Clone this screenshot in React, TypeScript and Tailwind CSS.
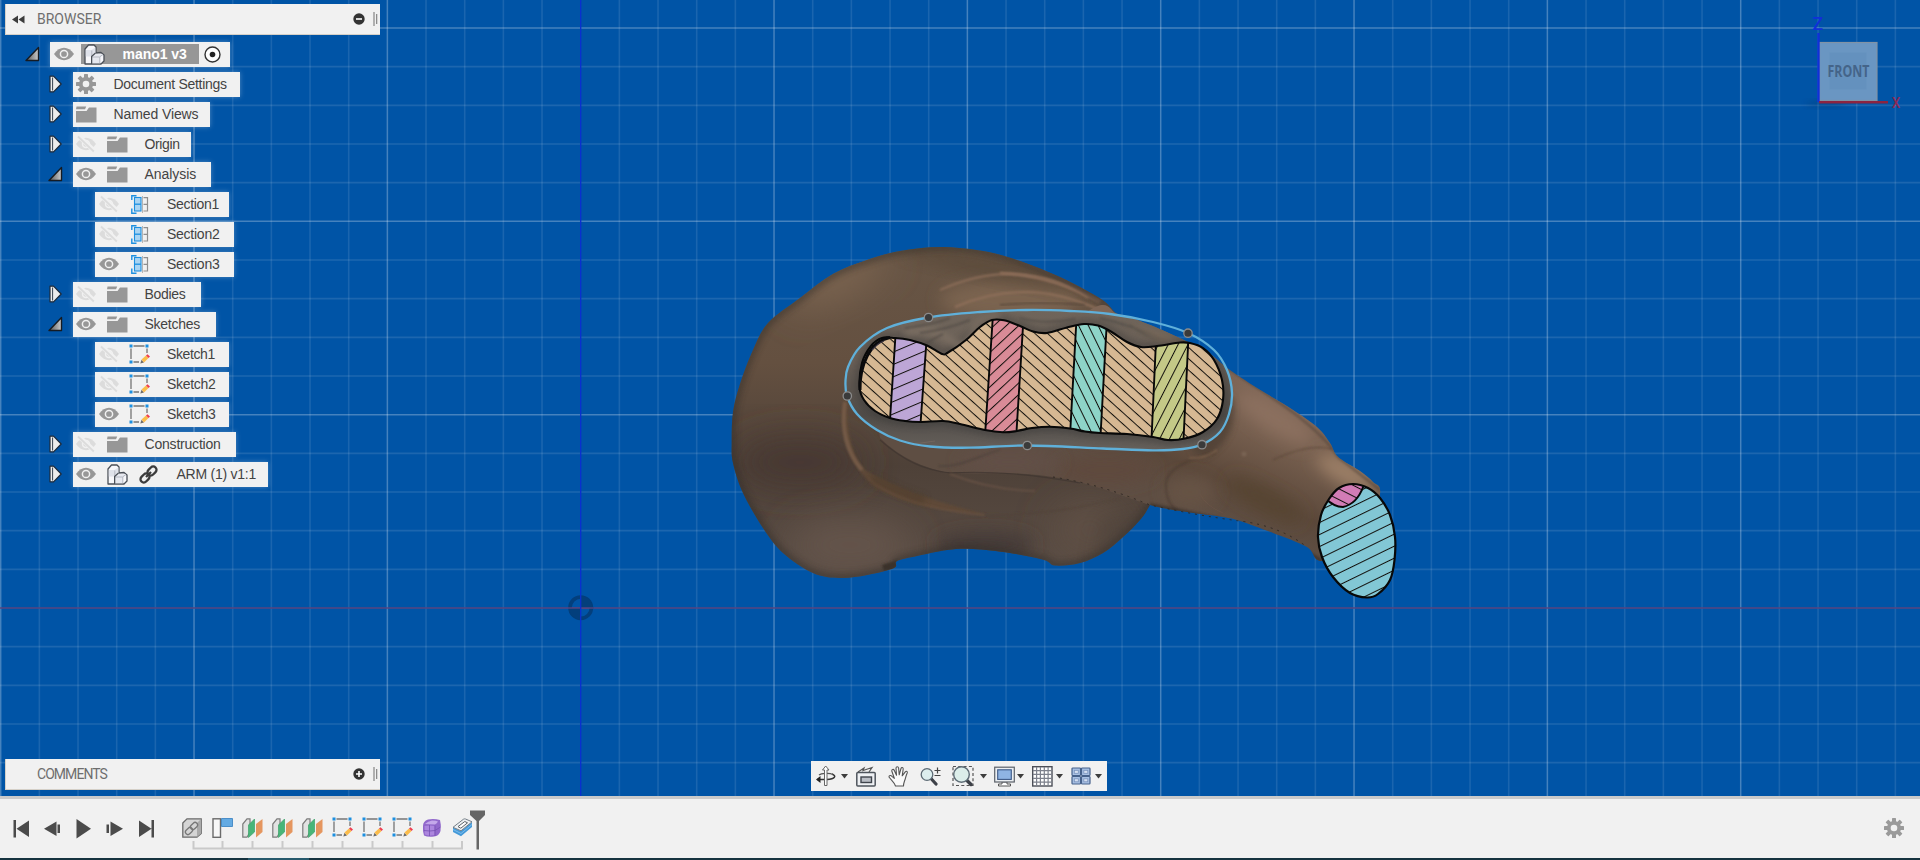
import React from "react";

type Pt = [number, number];

/* Closed or open Catmull-Rom spline through the given points. */
function spline(pts: Pt[], closed = true, t = 6): string {
  const n = pts.length;
  const at = (i: number): Pt =>
    closed ? pts[(i + n) % n] : pts[Math.max(0, Math.min(n - 1, i))];
  let d = `M${pts[0][0]} ${pts[0][1]}`;
  const segs = closed ? n : n - 1;
  for (let i = 0; i < segs; i++) {
    const p0 = at(i - 1), p1 = at(i), p2 = at(i + 1), p3 = at(i + 2);
    d += `C${(p1[0] + (p2[0] - p0[0]) / t).toFixed(1)} ${(p1[1] + (p2[1] - p0[1]) / t).toFixed(1)} ${(p2[0] - (p3[0] - p1[0]) / t).toFixed(1)} ${(p2[1] - (p3[1] - p1[1]) / t).toFixed(1)} ${p2[0]} ${p2[1]}`;
  }
  return closed ? d + "Z" : d;
}

const palm = spline([
  [731.7, 443], [733, 412], [740, 384], [753, 350], [768, 323], [800, 298], [833, 274], [867, 260], [900, 251],
  [940, 247], [983, 251], [1017, 260], [1053, 274], [1080, 287], [1104, 301], [1118, 315], [1150, 340], [1180, 400],
  [1175, 460], [1150, 505], [1140, 520], [1123, 537], [1103, 553], [1080, 563], [1055, 565.5], [1044, 560],
  [1010, 553], [973, 549], [947, 550], [917, 556], [897, 561], [894, 568], [867, 575], [840, 578],
  [813, 573], [783, 553], [763, 528], [743, 493], [733, 463],
]);
const thumb = spline([
  [1090, 310], [1118, 314], [1140, 321], [1173, 335], [1207, 352], [1227, 368], [1257, 388], [1290, 408], [1317, 427],
  [1330, 443], [1338, 457], [1360, 471], [1373, 482], [1380, 494], [1365, 545], [1322, 561], [1307, 547],
  [1273, 533], [1240, 521], [1223, 517], [1187, 512], [1150, 505], [1100, 488], [1060, 478], [1010, 473],
  [950, 473], [905, 458], [880, 438], [885, 410], [1000, 390],
]);
const section = spline([
  [895, 338], [882, 338], [871, 346], [862, 363], [859.5, 387], [864, 400], [875, 411], [890, 418], [905, 421], [920, 422],
  [943, 421], [960, 424], [985, 430], [1003, 432.3], [1017, 431], [1032, 428], [1050, 426.7], [1070, 428.5], [1085, 431.5], [1100, 433],
  [1127, 434], [1153, 437], [1168, 440], [1185, 438.5], [1203, 432], [1217, 419], [1223, 400], [1222, 380],
  [1214, 360], [1203, 348], [1190, 343], [1180, 342.5], [1157, 346], [1141, 347], [1127, 342], [1110, 331],
  [1098, 325.5], [1084, 324], [1067, 327.5], [1047, 333], [1033, 331.5], [1020, 326], [1004, 320.3], [992, 320],
  [980, 327], [966, 340], [948, 352.5], [942, 354], [927, 345.5], [910, 340],
]);
const loop = spline([
  [928, 317.5], [887, 328], [860, 347], [848, 367], [845.5, 381], [847, 396], [857, 414], [877, 430], [900, 440.5],
  [930, 446.5], [970, 447.7], [1027, 445.5], [1103, 448.5], [1153, 450.3], [1183, 449], [1202, 444.5], [1220, 432],
  [1229, 414], [1232, 393], [1227, 370], [1214, 350], [1188, 333], [1153, 322], [1110, 314], [1070, 311],
  [1027, 310], [980, 312],
]);
const tip = spline([
  [1353, 484], [1368, 488], [1380, 498], [1390, 515], [1395, 537], [1394.5, 560], [1390, 580], [1378, 594],
  [1367, 597.5], [1350, 593], [1333, 577], [1322, 557], [1318, 537], [1321, 515], [1329, 499], [1339, 488],
]);
const handles: Pt[] = [[928.5, 317.5], [847.3, 396], [1027.3, 445.5], [1202, 444.7], [1188, 333.2]];

function Hatch({ id, bg, angle, gap, w = 1 }: { id: string; bg: string; angle: number; gap: number; w?: number }) {
  return (
    <pattern id={id} width="40" height={gap} patternUnits="userSpaceOnUse" patternTransform={`rotate(${angle})`}>
      <rect width="40" height={gap} fill={bg} />
      <rect width="40" height={w} fill="#12100c" />
    </pattern>
  );
}

function Grid() {
  const out: React.ReactNode[] = [];
  for (let k = -15; k <= 34; k++) {
    if (k === 0) continue;
    const x = 580.7 + 38.667 * k;
    out.push(<line key={`v${k}`} x1={x} x2={x} y1="0" y2="796" stroke="#fff" strokeOpacity={k % 5 === 0 ? 0.27 : 0.1} strokeWidth={k % 5 === 0 ? 1.5 : 1.6} />);
  }
  for (let k = -4; k <= 15; k++) {
    if (k === 0) continue;
    const y = 608 - 38.667 * k;
    out.push(<line key={`h${k}`} y1={y} y2={y} x1="0" x2="1920" stroke="#fff" strokeOpacity={k % 5 === 0 ? 0.27 : 0.11} strokeWidth={k % 5 === 0 ? 1.5 : 1.6} />);
  }
  return <g>{out}</g>;
}

function Scene() {
  return (
    <svg className="absolute inset-0" width="1920" height="796" viewBox="0 0 1920 796">
      <defs>
        <Hatch id="tan" bg="#d6b893" angle={42} gap={8.4} />
        <Hatch id="purple" bg="#bda6d6" angle={-23} gap={11.4} />
        <Hatch id="pink" bg="#d98b97" angle={-43} gap={8.4} />
        <Hatch id="teal" bg="#8ed4c8" angle={64} gap={8.8} />
        <Hatch id="olive" bg="#c4c987" angle={-63} gap={8.8} />
        <Hatch id="cyan" bg="#82c7d5" angle={-26} gap={10.8} />
        <Hatch id="magenta" bg="#d27cb6" angle={27} gap={9.6} />
        <clipPath id="cPalm"><path d={palm} /></clipPath>
        <clipPath id="cThumb"><path d={thumb} /></clipPath>
        <clipPath id="cSection"><path d={section} /></clipPath>
        <clipPath id="cLoop"><path d={loop} /></clipPath>
        <clipPath id="cTip"><path d={tip} /></clipPath>
        <clipPath id="cBody"><path d={palm} /><path d={thumb} /></clipPath>
        <filter id="b20" x="-60%" y="-60%" width="220%" height="220%"><feGaussianBlur stdDeviation="18" /></filter>
        <filter id="b8" x="-60%" y="-60%" width="220%" height="220%"><feGaussianBlur stdDeviation="8" /></filter>
        <filter id="b3" x="-60%" y="-60%" width="220%" height="220%"><feGaussianBlur stdDeviation="3" /></filter>
        <filter id="b1" x="-30%" y="-30%" width="160%" height="160%"><feGaussianBlur stdDeviation="0.8" /></filter>
        <linearGradient id="gPalm" x1="0" y1="247" x2="0" y2="578" gradientUnits="userSpaceOnUse">
          <stop offset="0" stopColor="#685646" />
          <stop offset="0.35" stopColor="#645040" />
          <stop offset="0.66" stopColor="#4e4138" />
          <stop offset="1" stopColor="#5b4e46" />
        </linearGradient>
        <linearGradient id="gThumb" x1="1270" y1="390" x2="1215" y2="515" gradientUnits="userSpaceOnUse">
          <stop offset="0" stopColor="#7f6656" />
          <stop offset="0.35" stopColor="#755e4e" />
          <stop offset="0.75" stopColor="#5b483a" />
          <stop offset="1" stopColor="#5e4e43" />
        </linearGradient>
        <linearGradient id="gInner" x1="0" y1="310" x2="0" y2="450" gradientUnits="userSpaceOnUse">
          <stop offset="0" stopColor="#6f655b" />
          <stop offset="0.35" stopColor="#6b6057" />
          <stop offset="0.75" stopColor="#504c48" />
          <stop offset="1" stopColor="#66605b" />
        </linearGradient>
      </defs>

      <rect width="1920" height="796" fill="#0054a6" />
      <Grid />
      <line x1="0" x2="1920" y1="608" y2="608" stroke="#59447f" strokeWidth="1.6" />
      <g>
        <circle cx="580.7" cy="607.7" r="10.7" fill="none" stroke="#033f7c" strokeWidth="3.6" />
        <path d="M580.7 607.7V596A12 12 0 0 1 592.5 607.7ZM580.7 607.7V619.5A12 12 0 0 1 569 607.7Z" fill="#033f7c" />
        <path d="M568 608H593" stroke="#59447f" strokeWidth="1.4" />
      </g>
      <line x1="580.7" x2="580.7" y1="0" y2="796" stroke="#0b2fd0" strokeWidth="1.3" />

      <path d={palm} fill="url(#gPalm)" />
      <g clipPath="url(#cPalm)">
        <ellipse cx="835" cy="278" rx="55" ry="22" fill="#7a634f" filter="url(#b20)" transform="rotate(-25 835 278)" />
        <ellipse cx="1010" cy="300" rx="70" ry="20" fill="#7a6450" filter="url(#b8)" />
        <ellipse cx="990" cy="268" rx="90" ry="9" fill="#574737" opacity=".7" filter="url(#b8)" transform="rotate(12 990 268)" />
        <ellipse cx="800" cy="462" rx="65" ry="26" fill="#463930" filter="url(#b20)" />
        <ellipse cx="850" cy="545" rx="62" ry="26" fill="#65554c" filter="url(#b20)" />
        <ellipse cx="1090" cy="530" rx="40" ry="30" fill="#5f5044" filter="url(#b20)" />
        <ellipse cx="985" cy="544" rx="50" ry="13" fill="#453b37" filter="url(#b8)" />
        <path d={palm} fill="none" stroke="#2e2926" strokeWidth="8" opacity=".45" filter="url(#b3)" />
        <path d="M1090 566C1120 556 1142 530 1152 508L1100 520Z" fill="#3f3733" opacity=".3" filter="url(#b8)" />
        <path d="M882 565L898 560L896 569L884 571Z" fill="#3a322c" filter="url(#b1)" />
        <path d="M940 290Q985 270 1025 275T1088 298" fill="none" stroke="#8c6d58" strokeWidth="1.8" filter="url(#b1)" />
        <path d="M1000 273Q1050 275 1100 302" fill="none" stroke="#8d6d58" strokeWidth="2.6" filter="url(#b1)" />
        <path d="M955 307Q990 292 1025 292T1100 310" fill="none" stroke="#8f6f5a" strokeWidth="2.1" filter="url(#b1)" />
        <path d="M1000 305Q1040 301 1085 305" fill="none" stroke="#59483b" strokeWidth="1.5" filter="url(#b1)" />
        <path d="M1020 262Q1060 275 1112 310" fill="none" stroke="#54473d" strokeWidth="3" opacity=".7" filter="url(#b1)" />
        <path d="M844 397C838 430 848 462 872 485C900 504 935 510 985 514C935 502 895 488 865 470C850 455 847 425 848 405Z" fill="#5f4a37" filter="url(#b1)" />
        <path d="M845 402C841 430 846 452 862 470" fill="none" stroke="#7a5f4b" strokeWidth="4" opacity=".8" filter="url(#b1)" />
        <path d="M868 478C890 497 930 510 985 515" fill="none" stroke="#705644" strokeWidth="1.5" opacity=".8" filter="url(#b1)" />
        <path d="M870 478C890 487 905 495 925 500" fill="none" stroke="#4b3a2a" strokeWidth="8" opacity=".6" filter="url(#b3)" />
        <path d="M985 515Q1050 516 1120 498" fill="none" stroke="#514339" strokeWidth="1.2" filter="url(#b1)" />
      </g>

      <clipPath id="cThumbVisible">
        <path d="M1420 300V620H1280L1150 506C1110 489 1040 474 985 472L945 472C925 468 900 458 880 438L860 300Z" />
      </clipPath>
      <path d={thumb} fill="url(#gThumb)" clipPath="url(#cThumbVisible)" />
      <g clipPath="url(#cThumb)">
        <ellipse cx="1275" cy="418" rx="45" ry="15" fill="#8b705e" filter="url(#b8)" transform="rotate(32 1275 418)" />
        <ellipse cx="1345" cy="472" rx="32" ry="11" fill="#9d8068" filter="url(#b8)" transform="rotate(30 1345 472)" />
        <ellipse cx="1105" cy="470" rx="50" ry="14" fill="#5e4a3d" filter="url(#b8)" />
        <ellipse cx="1010" cy="462" rx="50" ry="12" fill="#625046" filter="url(#b8)" />
        <ellipse cx="1265" cy="500" rx="42" ry="12" fill="#574433" filter="url(#b8)" transform="rotate(28 1265 500)" />
        <ellipse cx="1190" cy="492" rx="26" ry="16" fill="#665245" filter="url(#b8)" />
        <path d="M1232 395C1240 430 1222 448 1205 458L1190 450Z" fill="#4f4035" opacity=".8" filter="url(#b3)" />
        <path d="M1215 453C1190 458 1169 468 1166 482C1165 500 1172 508 1182 515" fill="none" stroke="#4b3c31" strokeWidth="1.5" opacity=".8" filter="url(#b1)" />
        <path d="M1189 458Q1205 459 1217 450" fill="none" stroke="#86684f" strokeWidth="1.2" filter="url(#b1)" />
        <path d="M1273 460C1290 452 1312 444 1332 449" fill="none" stroke="#5a4537" strokeWidth="1.2" filter="url(#b1)" />
        <circle cx="1244" cy="454" r="2.500" fill="#806a5a" opacity=".7" filter="url(#b1)" />
        <path d="M1200 494Q1206 506 1223 513" fill="none" stroke="#705a4b" strokeWidth=".7" opacity=".6" />
        <path d="M1118 314C1160 328 1215 358 1227 368C1260 390 1317 423 1338 457L1380 490" fill="none" stroke="#3d342d" strokeWidth="2" opacity=".45" filter="url(#b1)" />
        <path d="M1150 505C1200 514 1265 527 1322 561" fill="none" stroke="#2f2823" strokeWidth="4" opacity=".5" filter="url(#b1)" />
      </g>
      <path d="M1053 477Q1100 484 1150 505Q1200 516 1240 521T1307 547" fill="none" stroke="#302924" strokeWidth="1" strokeDasharray="2 5" />
      <path d="M880 440C905 462 925 470 950 473C980 471 1020 472 1080 483" fill="none" stroke="#3b322e" strokeWidth="1.1" opacity=".55" />
      <path d="M938 466C960 468 980 455 1000 450" fill="none" stroke="#4c403a" strokeWidth="1.2" filter="url(#b1)" />
      <path d="M950 474C975 484 1000 490 1035 491" fill="none" stroke="#72594a" strokeWidth="1.2" filter="url(#b1)" />

      <g clipPath="url(#cBody)">
        <g clipPath="url(#cLoop)">
          <rect x="840" y="305" width="400" height="150" fill="url(#gInner)" />
          <path d={section} fill="none" stroke="#333130" strokeWidth="10" opacity=".35" filter="url(#b3)" />
          <path d="M905 333Q930 325 950 340T975 325Q985 315 1000 316" fill="none" stroke="#7d7063" strokeWidth="6" filter="url(#b3)" />
          <path d="M905 328Q935 324 950 318M920 333Q945 330 970 320M925 344Q935 338 943 334" fill="none" stroke="#4a443f" strokeWidth="1.4" opacity=".7" filter="url(#b1)" />
          <path d="M1020 318Q1045 325 1075 319M1100 318Q1130 325 1165 340M1130 325Q1145 337 1160 340" fill="none" stroke="#504b46" strokeWidth="1.8" opacity=".7" filter="url(#b1)" />
          <path d="M1125 322L1185 340L1160 342Z" fill="#7b6a5a" opacity=".7" filter="url(#b3)" />
          <path d="M902 444Q920 444 935 441" fill="none" stroke="#7d7064" strokeWidth=".8" opacity=".7" />
        </g>
      </g>

      <path d={loop} fill="none" stroke="#5fb0da" strokeWidth="2.3" />
      <path d={section} fill="url(#tan)" />
      <g clipPath="url(#cSection)" stroke="#080808" strokeWidth="1.900">
        <path d="M896.5 320L889 435H919.7L928 320Z" fill="url(#purple)" />
        <path d="M993.3 310L984.7 440H1016L1024 310Z" fill="url(#pink)" />
        <path d="M1077 310L1069.5 445H1100L1107.5 310Z" fill="url(#teal)" />
        <path d="M1156.5 330L1151 450H1183L1188.8 330Z" fill="url(#olive)" />
      </g>
      <path d={section} fill="none" stroke="#080808" strokeWidth="2.1" />
      <path d="M890 337.5C870 341 859.5 365 860 390" fill="none" stroke="#0a0a0c" strokeWidth="3" />
      <path d="M872 350Q878 343 884 341" fill="none" stroke="#3a3340" strokeWidth="1.3" />

      <path d={tip} fill="url(#cyan)" />
      <g clipPath="url(#cTip)">
        <path d="M1325 498Q1334 507 1343 507Q1357 504 1363.5 486L1350 470L1320 480Z" fill="url(#magenta)" stroke="#080808" strokeWidth="2" />
      </g>
      <path d={tip} fill="none" stroke="#080808" strokeWidth="2.2" />

      {handles.map(([x, y]) => (
        <circle key={x} cx={x} cy={y} r="4.200" fill="#3a3a3a" stroke="#8b8b8b" strokeWidth="1.300" />
      ))}

      <ViewCube />
    </svg>
  );
}

function ViewCube() {
  return (
    <g>
      <ellipse cx="1826" cy="104" rx="20" ry="2.500" fill="#02346c" opacity=".45" filter="url(#b3)" />
      <rect x="1819.5" y="42.5" width="57.5" height="58" fill="#6a96c2" stroke="#8193a5" strokeWidth="1.2" />
      <rect x="1829.5" y="52.5" width="37" height="37" fill="#6491be" />
      <text x="1848.5" y="77" textAnchor="middle" textLength="42" lengthAdjust="spacingAndGlyphs" fontFamily="'Open Sans', sans-serif" fontWeight="700" fontSize="15.5" fill="#446489">FRONT</text>
      <path d="M1818.5 33V102" stroke="#1030d8" strokeWidth="2.4" />
      <path d="M1819 102.3H1888" stroke="#8c2440" strokeWidth="2.4" />
      <text x="1817.7" y="29.5" textAnchor="middle" fontFamily="Roboto, sans-serif" fontSize="17.5" fontWeight="500" fill="#1030d8">Z</text>
      <text x="1896" y="107.5" textAnchor="middle" textLength="8.5" lengthAdjust="spacingAndGlyphs" fontFamily="Roboto, sans-serif" fontSize="15.5" fontWeight="500" fill="#8c2a55">X</text>
    </g>
  );
}

/* ---------- tree icons ---------- */

const Eye = () => (
  <svg width="20" height="14" viewBox="0 0 20 14">
    <path d="M0 7Q4.5 .8 10 .8T20 7Q15.5 13.2 10 13.2T0 7Z" fill="#979797" />
    <circle cx="10" cy="7" r="3.6" fill="none" stroke="#f1f1f1" strokeWidth="1.5" />
  </svg>
);
const EyeOff = () => (
  <svg width="20" height="18" viewBox="0 0 20 18">
    <path d="M0 9Q4.5 2.8 10 2.8T20 9Q15.5 15.2 10 15.2T0 9Z" fill="#dcdcdc" />
    <circle cx="10" cy="9" r="3.5" fill="none" stroke="#f1f1f1" strokeWidth="1.5" />
    <path d="M2.5 1L18.5 16" stroke="#f1f1f1" strokeWidth="4.5" />
    <path d="M2 1.5L17.8 16.5" stroke="#dcdcdc" strokeWidth="1.8" />
  </svg>
);
const Folder = () => (
  <svg width="21" height="17" viewBox="0 0 21 17">
    <path d="M0 5H10.500L13 1.500H20.500V16.500H0Z" fill="#979797" />
    <path d="M.5 .5H10.200L9 3.300H0Z" fill="#979797" />
  </svg>
);
const Gear = ({ s = 20, c = "#979797" }: { s?: number; c?: string }) => (
  <svg width={s} height={s} viewBox="-10 -10 20 20">
    {[0, 45, 90, 135].map((a) => (
      <rect key={a} x="-2" y="-10" width="4" height="20" rx=".6" fill={c} transform={`rotate(${a})`} />
    ))}
    <circle r="7.1" fill={c} />
    <circle r="3.3" fill="#f1f1f1" />
  </svg>
);
const Cubes = () => (
  <svg width="21" height="21" viewBox="0 0 21 21" strokeLinejoin="round">
    <path d="M1 5L4.5 1H10L12 3V9L17 8.5L20 11V17L17 20H1Z" fill="#f7f7fa" stroke="#4a4f57" strokeWidth="1.3" />
    <path d="M1.8 6H7.5L11.3 3.5V9L7.5 12.5H1.8Z" fill="#dfe2ea" />
    <path d="M8 19.2V13L11 9.8L19.2 10.5L16 13.5V19.2Z" fill="#e6e8ef" />
    <path d="M7.8 19V6.5M7.8 13H15.5L19 10.5M15.8 19V13" fill="none" stroke="#b4b8c2" strokeWidth="1" />
    <path d="M7.6 20V12.5L11.5 9" fill="none" stroke="#4a4f57" strokeWidth="1.2" />
  </svg>
);
const LinkIcon = () => (
  <svg width="21" height="21" viewBox="0 0 21 21" fill="none" stroke="#3c3c3c" strokeWidth="2.3">
    <rect x="-5" y="-3.3" width="10" height="6.6" rx="3.3" transform="translate(14 7) rotate(-45)" />
    <rect x="-5" y="-3.3" width="10" height="6.6" rx="3.3" transform="translate(7 14) rotate(-45)" />
    <path d="M8 13L13 8" />
  </svg>
);
const SectionIcon = () => (
  <svg width="18" height="19" viewBox="0 0 18 19" fill="none">
    <rect x="3.5" y="2.5" width="6.5" height="13.5" fill="#a8d4f3" stroke="#1c8fe0" strokeWidth="1.1" />
    <path d="M3.5 9.2H10" stroke="#1c8fe0" strokeWidth="1.3" />
    <path d="M5.5 .7H.8V5M.8 13.5V18.2H5.5" stroke="#1c8fe0" strokeWidth="1.4" />
    <path d="M11.5 1V18" stroke="#a6a6a6" strokeWidth=".8" />
    <path d="M12.5 2.7H16.5V16H12.5M12.5 9.3H16.5" stroke="#8f8f8f" strokeWidth="1.2" />
  </svg>
);
const SketchIcon = () => (
  <svg width="21" height="21" viewBox="0 0 21 21">
    <path d="M4.5 2H15.5M2 4.5V15M18 4.5V9M4.5 18H10" stroke="#757575" strokeWidth="1.3" fill="none" />
    <path d="M.5 .5h3v3h-3zM16.5 .5h3v3h-3zM.5 16.5h3v3h-3z" fill="#1c8fe0" />
    <path d="M11.3 19.5L12.5 15.8L15 18.5Z" fill="#6b6b6b" />
    <path d="M12.5 15.5L17 11.5L19.5 14L15 18.5Z" fill="#fbbc4b" />
    <path d="M17 11.5L18.5 10.2L21 12.5L19.5 14Z" fill="#ee3b4e" />
  </svg>
);

const Collapsed = () => (
  <svg width="15" height="18" viewBox="0 0 15 18">
    <path d="M2 1.2H5.5L13.2 9L5.5 16.8H2Z" fill="#ececec" stroke="#1e2b3a" strokeWidth="1.2" strokeLinejoin="round" />
    <path d="M4.6 2.5V15.5" stroke="#1e2b3a" strokeWidth=".9" />
  </svg>
);
const Expanded = () => (
  <svg width="15" height="16" viewBox="0 0 15 16">
    <defs><linearGradient id="exp" x1="0" x2="1"><stop offset="0" stopColor="#555" /><stop offset="1" stopColor="#ccc" /></linearGradient></defs>
    <path d="M13.5 1.5V14.5H1Z" fill="url(#exp)" stroke="#161b22" strokeWidth="1.4" strokeLinejoin="round" />
  </svg>
);

interface Row {
  label: string;
  level: 1 | 2;
  state?: "open" | "closed";
  eye?: "on" | "off";
  icon: "gear" | "folder" | "section" | "sketch" | "link";
  width: string;
  tracking: string;
}

const rows: Row[] = [
  { label: "Document Settings", level: 1, state: "closed", icon: "gear", width: "w-[167px]", tracking: "tracking-[-0.3px]" },
  { label: "Named Views", level: 1, state: "closed", icon: "folder", width: "w-[137px]", tracking: "tracking-[-0.1px]" },
  { label: "Origin", level: 1, state: "closed", eye: "off", icon: "folder", width: "w-[118px]", tracking: "tracking-[-0.35px]" },
  { label: "Analysis", level: 1, state: "open", eye: "on", icon: "folder", width: "w-[138px]", tracking: "tracking-[-0.05px]" },
  { label: "Section1", level: 2, eye: "off", icon: "section", width: "w-[134px]", tracking: "tracking-[-0.3px]" },
  { label: "Section2", level: 2, eye: "off", icon: "section", width: "w-[139px]", tracking: "tracking-[-0.25px]" },
  { label: "Section3", level: 2, eye: "on", icon: "section", width: "w-[139px]", tracking: "tracking-[-0.25px]" },
  { label: "Bodies", level: 1, state: "closed", eye: "off", icon: "folder", width: "w-[128px]", tracking: "tracking-[-0.3px]" },
  { label: "Sketches", level: 1, state: "open", eye: "on", icon: "folder", width: "w-[143px]", tracking: "tracking-[-0.25px]" },
  { label: "Sketch1", level: 2, eye: "off", icon: "sketch", width: "w-[134px]", tracking: "tracking-[-0.4px]" },
  { label: "Sketch2", level: 2, eye: "off", icon: "sketch", width: "w-[134px]", tracking: "tracking-[-0.3px]" },
  { label: "Sketch3", level: 2, eye: "on", icon: "sketch", width: "w-[134px]", tracking: "tracking-[-0.3px]" },
  { label: "Construction", level: 1, state: "closed", eye: "off", icon: "folder", width: "w-[163px]", tracking: "tracking-[-0.2px]" },
  { label: "ARM (1) v1:1", level: 1, state: "closed", eye: "on", icon: "link", width: "w-[195px]", tracking: "tracking-[-0.25px]" },
];

function TreeRow({ row }: { row: Row }) {
  const icon = {
    gear: <Gear />, folder: <Folder />, section: <SectionIcon />, sketch: <SketchIcon />, link: <Cubes />,
  }[row.icon];
  return (
    <div className="flex h-[25px] items-center">
      <div className={row.level === 1 ? "flex w-[72.5px] shrink-0 pl-12" : "w-[95px] shrink-0"}>
        {row.state === "closed" && <Collapsed />}
        {row.state === "open" && <Expanded />}
      </div>
      <div className={`flex h-[25px] items-center bg-[#f1f1f1] shadow-[0_0_5px_rgba(255,255,255,0.3)] ${row.width}`}>
        {row.eye && <span className="flex w-[27px] shrink-0 justify-center">{row.eye === "on" ? <Eye /> : <EyeOff />}</span>}
        <span className={row.eye ? "flex w-[35px] shrink-0 justify-center" : "mr-1 flex w-[27px] shrink-0 justify-center"}>{icon}</span>
        {row.icon === "link" && <span className="mr-1 flex w-7 shrink-0 justify-center"><LinkIcon /></span>}
        <span className={`ml-2.5 whitespace-nowrap ${row.tracking}`}>{row.label}</span>
      </div>
    </div>
  );
}

function Panel({ title, open }: { title: string; open: boolean }) {
  return (
    <div className="ml-[5px] flex h-[31px] w-[375px] items-center border-b border-l border-[#d5d0c8] bg-[#f1f1f1] pr-[2px]">
      <span className="flex w-[31px] pl-[6px]">
        {open && (
          <svg width="13" height="9" viewBox="0 0 13 9"><path d="M6 .5V8.5L0 4.5ZM12.5 .5V8.5L6.5 4.5Z" fill="#3c3c3c" /></svg>
        )}
      </span>
      <span className={`flex-1 font-[Roboto,sans-serif] text-[14px] text-[#6e6e6e] ${open ? "tracking-[0px]" : "tracking-[-0.95px]"}`}>{title}</span>
      <svg width="12" height="12" viewBox="0 0 12 12">
        <circle cx="6" cy="6" r="5.7" fill="#333" />
        <path d={open ? "M3 6H9" : "M3 6H9M6 3V9"} stroke="#fff" strokeWidth="1.6" />
      </svg>
      <svg className="ml-2" width="5" height="14" viewBox="0 0 5 14"><path d="M1 0V14M3.7 2V12" stroke="#7b7b7b" strokeWidth="1.100" /></svg>
    </div>
  );
}

/* ---------- navigation bar ---------- */

const Caret = () => (
  <svg width="7" height="5" viewBox="0 0 7 5"><path d="M0 0H7L3.5 4.5Z" fill="#3d3d3d" /></svg>
);

function NavBar() {
  return (
    <div className="absolute top-[761px] left-[811px] flex h-[30px] w-[296px] items-center bg-[#f1f1f1] pl-[4px]">
      <svg width="21" height="22" viewBox="0 0 21 22" fill="none">
        <path d="M17 9C22 11 20 14 12 14.5H2" stroke="#333" strokeWidth="1.5" />
        <path d="M4 10C6 8.5 14 7.5 18 9.5" stroke="#555" strokeWidth="1.3" />
        <path d="M5.5 11L1 14.5L5.5 18Z" fill="#222" />
        <path d="M9.5 20.5V5H7.5L10.7 1L14 5H12V20.5Z" fill="#fff" stroke="#666" strokeWidth="1" />
      </svg>
      <span className="ml-[5px]"><Caret /></span>
      <svg className="ml-2" width="20" height="21" viewBox="0 0 20 21" fill="none">
        <path d="M2 6L8 2L7 4.5L16 1.5L13 6" stroke="#555" strokeWidth="1.2" />
        <rect x=".8" y="6.5" width="18.4" height="13.5" rx="1" fill="#eef0f3" stroke="#4e545c" strokeWidth="1.5" />
        <rect x="5" y="11" width="10.5" height="5.5" fill="#b9bdc4" stroke="#3f444c" strokeWidth="1.4" />
      </svg>
      <svg className="ml-3" width="21" height="21" viewBox="0 0 21 21">
        <path d="M7.5 20C6.5 16.5 3 14 1 11C.8 9.3 2.8 9 4 10.3L6.3 12.3L3.8 5C3.5 3.3 5.5 2.8 6.2 4.3L8.5 9.3L8 2C8.2.4 10.3.4 10.6 2L11.2 8.8L13 2.5C13.5 1 15.3 1.4 15.2 3L14.2 9.8L17.3 5.8C18.4 4.7 19.8 5.6 19.2 7C17.5 10.5 17.8 12 16.5 15C15.8 17 15.5 18 15.5 20Z" fill="#fafafa" stroke="#555" strokeWidth="1.1" strokeLinejoin="round" />
      </svg>
      <svg className="ml-[11px]" width="22" height="20" viewBox="0 0 22 20">
        <path d="M10.5 12L16 18" stroke="#3d4148" strokeWidth="3.2" strokeLinecap="round" />
        <circle cx="7" cy="8.5" r="5.8" fill="#dceeee" stroke="#5d6b75" strokeWidth="1.3" />
        <path d="M14.5 4.5H20.5M17.5 1.5V7.5M14.5 9.5H20.5" stroke="#444" strokeWidth="1.2" />
      </svg>
      <svg className="ml-[10px]" width="22" height="22" viewBox="0 0 22 22" fill="none">
        <path d="M1 1.5H21V20.5H1Z" stroke="#555" strokeWidth="1.2" strokeDasharray="3 2.3" />
        <path d="M13.5 14L19 19.5" stroke="#3d4148" strokeWidth="3.4" strokeLinecap="round" />
        <circle cx="9.5" cy="9.5" r="7.8" fill="#dceeea" stroke="#5d6b75" strokeWidth="1.4" />
      </svg>
      <span className="ml-[6px]"><Caret /></span>
      <svg className="ml-[7px]" width="21" height="21" viewBox="0 0 21 21">
        <path d="M8 16H13V18H16.5V20H4.5V18H8Z" fill="#fff" stroke="#555" strokeWidth="1" />
        <rect x=".7" y="1.2" width="19.6" height="14.8" fill="#eceff2" stroke="#5c626a" strokeWidth="1.2" />
        <rect x="3.7" y="3.8" width="13.6" height="9.6" fill="#8fb4e3" stroke="#3d5a86" strokeWidth="1.1" />
      </svg>
      <span className="ml-[2px]"><Caret /></span>
      <svg className="ml-2" width="21" height="21" viewBox="0 0 21 21" fill="none">
        <rect x=".7" y=".7" width="19.3" height="19.3" fill="#fff" stroke="#4c4f57" strokeWidth="1.4" />
        <path d="M4.6 1V20M8.4 1V20M12.3 1V20M16.1 1V20M1 4.6H20M1 8.4H20M1 12.3H20M1 16.1H20" stroke="#7d818c" strokeWidth="1.2" />
      </svg>
      <span className="ml-[3px]"><Caret /></span>
      <svg className="ml-2" width="20" height="18" viewBox="0 0 20 18">
        {[[1, 1], [10.5, 1], [1, 9.5], [10.5, 9.5]].map(([x, y]) => (
          <g key={`${x}-${y}`}>
            <rect x={x} y={y} width="8.5" height="7.5" rx=".8" fill="#a9c1e4" stroke="#47628c" strokeWidth="1.2" />
            <rect x={x + 2.3} y={y + 2.3} width="4" height="3" fill="#d5e0f2" stroke="#7a93bd" strokeWidth=".8" />
          </g>
        ))}
      </svg>
      <span className="ml-[4px]"><Caret /></span>
    </div>
  );
}

/* ---------- timeline ---------- */

const LinkedPart = () => (
  <svg width="20" height="20" viewBox="0 0 20 20" fill="none">
    <path d="M.8 5L5 .8H19.2V15.5L15 19.2H.8Z" fill="#d5d5d5" stroke="#6b6b6b" strokeWidth="1.3" />
    <path d="M15 19L19 15.5V1L15 5Z" fill="#aaa" />
    <g stroke="#777" strokeWidth="1.3">
      <rect x="-4" y="-2.5" width="8" height="5" rx="2.5" transform="translate(7 13) rotate(-45)" />
      <rect x="-4" y="-2.5" width="8" height="5" rx="2.5" transform="translate(12 8) rotate(-45)" />
    </g>
  </svg>
);
const Canvas = () => (
  <svg width="21" height="20" viewBox="0 0 21 20">
    <rect x="1" y=".8" width="7.5" height="18.5" fill="#f7f7f7" stroke="#6b6b6b" strokeWidth="1.4" />
    <path d="M9.5 .5H20.5V8.5H9.5Z" fill="#64aae2" stroke="#3f87c4" strokeWidth=".9" />
  </svg>
);
const Split = () => (
  <svg width="21" height="20" viewBox="0 0 21 20">
    <path d="M.8 19.2V6L5 .8H8V14L5 19.2Z" fill="#e2e2e2" stroke="#7b7b7b" strokeWidth="1.2" />
    <path d="M6.5 7L12.5 1V14L6.5 19.5Z" fill="#49b579" stroke="#3ba36a" strokeWidth=".7" />
    <path d="M14 6L20.5 1V14L14 19.5Z" fill="#e5965f" />
  </svg>
);
const Form = () => (
  <svg width="20" height="20" viewBox="0 0 20 20">
    <path d="M1 8Q1 3 6 1.5Q12 .5 18 2Q19.5 7 18.5 13Q17 18 12 18.5Q6 19.5 2 17.5Q.5 13 1 8Z" fill="#9168cb" />
    <path d="M3 6Q6 3 10 2.5Q14 2.5 16 3.5Q15 5.500 13 6.500Q7 6 3 6Z" fill="#c4a8ea" />
    <path d="M2.5 8Q8 7 12.5 8V17Q7 18 2.8 16.5Z" fill="#ac86de" />
    <path d="M7.5 7V18M2 12.5Q8 13.5 13 12.5L18.5 9M13 7.5V18" fill="none" stroke="#7650b2" strokeWidth=".8" />
  </svg>
);
const Shell = () => (
  <svg width="21" height="19" viewBox="0 0 21 19">
    <path d="M1 9.5V14L9 18.300L20 9V4L9 13Z" fill="#4499d8" />
    <path d="M1 11.500L9 15.500L20 6.500" fill="none" stroke="#7dbdec" strokeWidth="1" />
    <path d="M1 9.300L11.500 1.200Q12.500 .6 13.500 1L20 3.800L9 12.800Z" fill="#eef1f3" stroke="#737d86" strokeWidth="1" />
    <path d="M6 8.600L12.800 3.500L15.500 4.800L8.800 10.200Z" fill="#fff" stroke="#5b6269" strokeWidth="1" />
  </svg>
);

const features = [LinkedPart, Canvas, Split, Split, Split, SketchIcon, SketchIcon, SketchIcon, Form, Shell];

function Timeline() {
  return (
    <footer className="flex h-[62px] w-full items-start border-t-[3px] border-[#cacaca] bg-[#f1f1f1]">
      <div className="mt-5 ml-[13px] flex items-center">
        <svg width="142" height="20" viewBox="0 0 142 20" fill="#4b4b4b">
          <path d="M.5 1H3V18.5H.5ZM16 1.5V18L3.5 9.8Z" />
          <path d="M43.5 2.5V17L31 9.8ZM44.5 5.5H47V14H44.5Z" />
          <path d="M63.5 0V19.5L78 9.8Z" />
          <path d="M93.5 5.5H96V14H93.5ZM97.5 2.5V17L110 9.8Z" />
          <path d="M126 1.5V18L138.5 9.8ZM138.5 1H141V18.5H138.5Z" />
        </svg>
      </div>
      <div className="ml-[22px] flex flex-col pt-[18px]">
        <div className="flex">
          {features.map((Icon, i) => (
            <span key={i} className="flex h-[21px] w-[30px] items-center justify-center"><Icon /></span>
          ))}
        </div>
        <svg className="mt-[3px] ml-[15px]" width="272" height="10" viewBox="0 0 272 10">
          <path d="M1.5 0V7.5H270V0M30.5 0V7M60.5 0V7M90.5 0V7M120.5 0V7M150.5 0V7M180.5 0V7M210.5 0V7M240.5 0V7" fill="none" stroke="#c9c9c9" strokeWidth="2" />
        </svg>
      </div>
      <svg className="mt-[11px] -ml-[7px]" width="15" height="40" viewBox="0 0 15 40">
        <path d="M0 .5H15V5L9 11V39.5H6.5V11L0 5Z" fill="#666" />
      </svg>
      <div className="mt-[19px] mr-4 ml-auto"><Gear c="#9a9a9a" /></div>
    </footer>
  );
}

export default function App() {
  return (
    <div className="flex h-[860px] w-[1920px] flex-col overflow-hidden bg-[#16333f] font-['Liberation_Sans',Arial,sans-serif] text-[14px] text-[#434343]">
      <main className="relative h-[796px] w-full shrink-0 overflow-hidden">
        <Scene />
        <div className="relative flex h-full flex-col pt-1">
          <Panel title="BROWSER" open />
          <div className="mt-[6.5px] flex flex-col gap-[5px]">
            <div className="flex h-[25px] items-center">
              <div className="flex w-[50px] shrink-0 pl-[25px]"><Expanded /></div>
              <div className="flex h-[25px] w-[180px] items-center bg-[#f1f1f1] shadow-[0_0_5px_rgba(255,255,255,0.3)]">
                <span className="flex w-[27px] justify-center"><Eye /></span>
                <div className="ml-1 flex h-5 w-[118px] items-center bg-[#979797] pl-[3px]">
                  <Cubes />
                  <span className="ml-[17.5px] font-bold tracking-[-0.05px] text-white">mano1 v3</span>
                </div>
                <svg className="ml-[4.5px]" width="17" height="17" viewBox="0 0 17 17">
                  <circle cx="8.5" cy="8.5" r="7.5" fill="#fff" stroke="#333" strokeWidth="1.4" />
                  <circle cx="8.5" cy="8.5" r="2.8" fill="#222" />
                </svg>
              </div>
            </div>
            {rows.map((row) => <TreeRow key={row.label} row={row} />)}
          </div>
          <div className="mt-auto mb-[6px]"><Panel title="COMMENTS" open={false} /></div>
        </div>
        <NavBar />
      </main>
      <Timeline />
      <div className="flex h-[2px] w-full pl-[248px]"><div className="h-full w-[61px] bg-[#275a6d]" /></div>
    </div>
  );
}
